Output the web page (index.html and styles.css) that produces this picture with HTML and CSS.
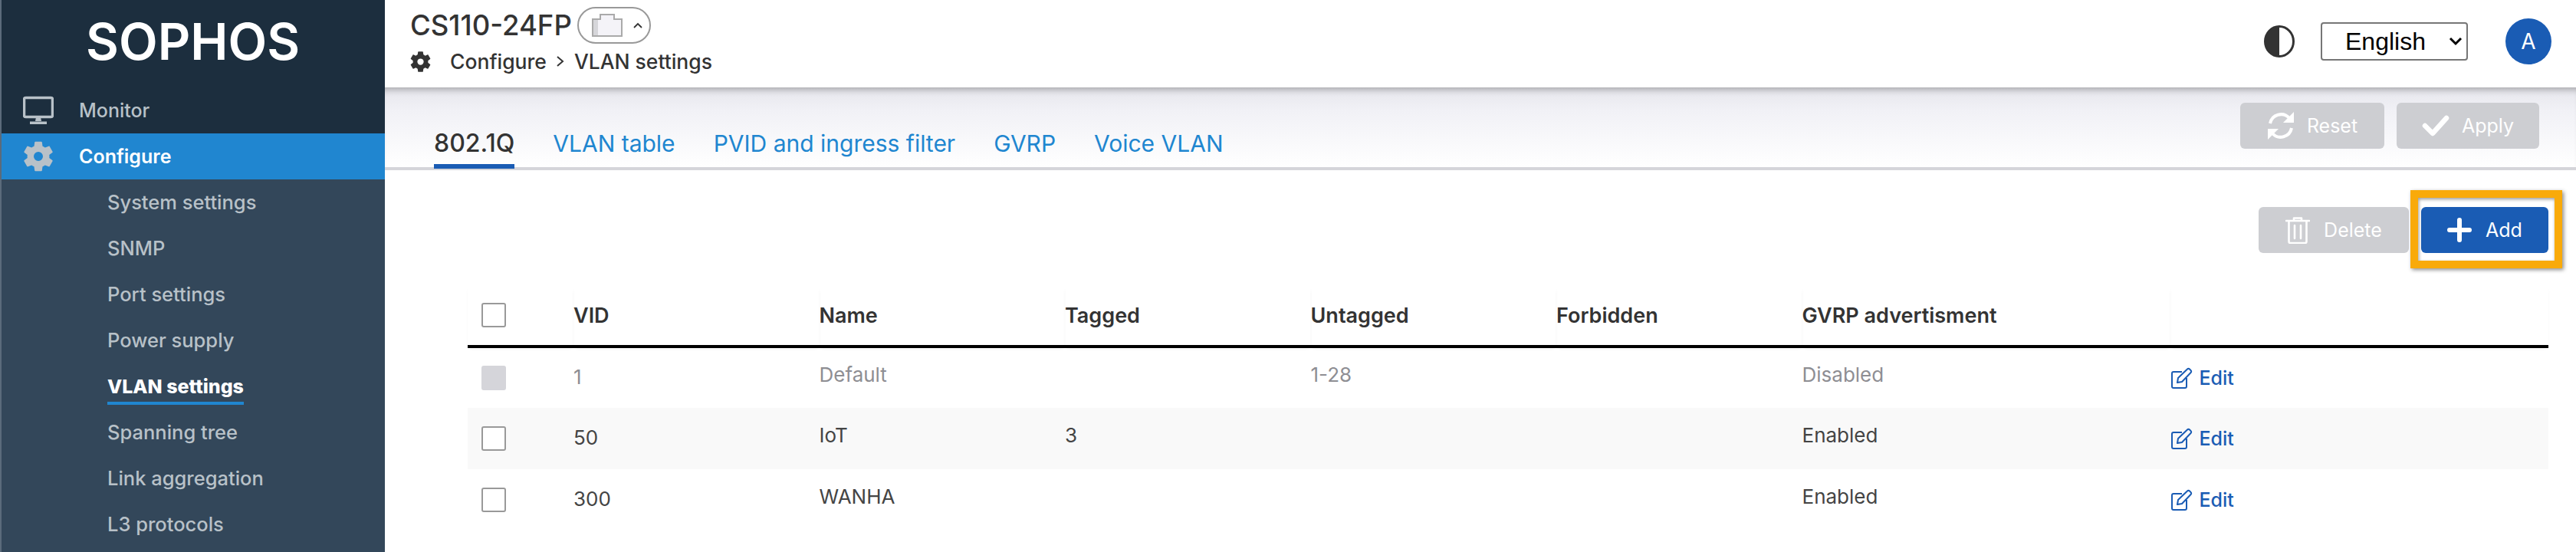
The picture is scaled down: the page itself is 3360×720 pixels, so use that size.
FILE: index.html
```html
<!DOCTYPE html>
<html lang="en">
<head>
    <meta charset="UTF-8">
    <title>VLAN settings</title>
    <link rel="stylesheet" href="styles.css">
</head>
<body>
    <div class="app">
        <aside class="sidebar">
            <div class="logo">SOPHOS</div>
            <a class="nav-item">
                <svg class="nav-icon" viewBox="0 0 40 36"><rect x="1.5" y="1.5" width="37" height="25" rx="2" fill="none" stroke="currentColor" stroke-width="3.5"/><path d="M17 27h6l1 5h-8zM9 32.500h22V36H9z" fill="currentColor"/></svg>
                <span>Monitor</span>
            </a>
            <a class="nav-item active">
                <svg class="nav-icon nav-gear" viewBox="0 0 24 24"><use href="#gear"/></svg>
                <span>Configure</span>
            </a>
            <ul class="subnav">
                <li>System settings</li>
                <li>SNMP</li>
                <li>Port settings</li>
                <li>Power supply</li>
                <li class="current"><span>VLAN settings</span></li>
                <li>Spanning tree</li>
                <li>Link aggregation</li>
                <li>L3 protocols</li>
            </ul>
        </aside>

        <main class="content">
            <header class="topbar">
                <div class="device">
                    <div class="device-title">
                        <h1>CS110-24FP</h1>
                        <div class="device-pill">
                            <svg class="port-icon" viewBox="0 0 40 30"><path d="M1 29V7h10V1h18v6h10v22z" fill="#f4f3f8" stroke="#aaa" stroke-width="2"/><path d="M2 8h6v20H2z" fill="#d6d6da"/></svg>
                            <svg class="pill-chevron" viewBox="0 0 12 8"><path d="M1 7l5-5 5 5" fill="none" stroke="#333" stroke-width="1.800"/></svg>
                        </div>
                    </div>
                    <div class="crumbs">
                        <svg class="crumb-gear" viewBox="0 0 24 24"><use href="#gear"/></svg>
                        <span>Configure</span>
                        <svg class="crumb-sep" viewBox="0 0 12 16"><path d="M2 2l7 6-7 6" fill="none" stroke="#333" stroke-width="2"/></svg>
                        <span>VLAN settings</span>
                    </div>
                </div>
                <div class="top-tools">
                    <svg class="contrast" viewBox="0 0 40 42"><ellipse cx="20" cy="21" rx="18.500" ry="19.500" fill="#fff" stroke="#333" stroke-width="3"/><path d="M20 2a19 19 0 0 0 0 38z" fill="#333"/></svg>
                    <div class="lang">
                        <select class="lang-select"><option>English</option></select>
                        <svg class="lang-chevron" viewBox="0 0 18 12"><path d="M2 2l7 7 7-7" fill="none" stroke="#000" stroke-width="3"/></svg>
                    </div>
                    <div class="avatar">A</div>
                </div>
            </header>

            <div class="tabbar">
                <nav class="tabs">
                    <a class="tab selected">802.1Q</a>
                    <a class="tab">VLAN table</a>
                    <a class="tab">PVID and ingress filter</a>
                    <a class="tab">GVRP</a>
                    <a class="tab">Voice VLAN</a>
                </nav>
                <div class="tab-actions">
                    <button class="btn btn-off btn-reset">
                        <svg class="btn-icon-reset" viewBox="0 0 36 36"><path d="M4 15a14.500 14.500 0 0 1 25-7" fill="none" stroke="currentColor" stroke-width="4"/><path d="M35 0v14H21z" fill="currentColor"/><path d="M32 21a14.500 14.500 0 0 1-25 7" fill="none" stroke="currentColor" stroke-width="4"/><path d="M1 36V22h14z" fill="currentColor"/></svg>
                        Reset
                    </button>
                    <button class="btn btn-off btn-apply">
                        <svg class="btn-icon-check" viewBox="0 0 36 28"><path d="M4 14l10 10L32 4" fill="none" stroke="currentColor" stroke-width="6.500" stroke-linecap="round" stroke-linejoin="round"/></svg>
                        Apply
                    </button>
                </div>
            </div>

            <section class="panel">
                <div class="panel-actions">
                    <button class="btn btn-off btn-delete">
                        <svg class="btn-icon-trash" viewBox="0 0 32 36"><path d="M1 6h30M11 6V2.500h10V6M4.500 6v27a2 2 0 0 0 2 2h19a2 2 0 0 0 2-2V6M12 12v17M20 12v17" fill="none" stroke="currentColor" stroke-width="2.600" stroke-linecap="round" stroke-linejoin="round"/></svg>
                        Delete
                    </button>
                    <button class="btn btn-add">
                        <svg class="btn-icon-plus" viewBox="0 0 32 32"><path d="M16 3v26M3 16h26" fill="none" stroke="currentColor" stroke-width="6" stroke-linecap="round"/></svg>
                        Add
                    </button>
                    <div class="highlight"></div>
                </div>

                <table class="vlan-table">
                    <thead>
                        <tr>
                            <th class="col-check"><span class="check"></span></th>
                            <th class="col-vid">VID</th>
                            <th class="col-name">Name</th>
                            <th class="col-name">Tagged</th>
                            <th class="col-name">Untagged</th>
                            <th class="col-name">Forbidden</th>
                            <th class="col-gvrp">GVRP advertisment</th>
                            <th></th>
                        </tr>
                    </thead>
                    <tbody>
                        <tr class="disabled">
                            <td><span class="check"></span></td>
                            <td class="vid">1</td>
                            <td>Default</td>
                            <td></td>
                            <td>1-28</td>
                            <td></td>
                            <td>Disabled</td>
                            <td class="edit"><a><svg viewBox="0 0 28 28"><use href="#pencil"/></svg>Edit</a></td>
                        </tr>
                        <tr>
                            <td><span class="check"></span></td>
                            <td class="vid">50</td>
                            <td>IoT</td>
                            <td>3</td>
                            <td></td>
                            <td></td>
                            <td>Enabled</td>
                            <td class="edit"><a><svg viewBox="0 0 28 28"><use href="#pencil"/></svg>Edit</a></td>
                        </tr>
                        <tr>
                            <td><span class="check"></span></td>
                            <td class="vid">300</td>
                            <td>WANHA</td>
                            <td></td>
                            <td></td>
                            <td></td>
                            <td>Enabled</td>
                            <td class="edit"><a><svg viewBox="0 0 28 28"><use href="#pencil"/></svg>Edit</a></td>
                        </tr>
                    </tbody>
                </table>
            </section>
        </main>
    </div>

    <!-- shared icons -->
    <svg class="icon-defs" aria-hidden="true">
        <symbol id="gear" viewBox="0 0 24 24">
            <path fill="currentColor" fill-rule="evenodd" d="M19.140 12.940c.04-.3.06-.61.06-.94 0-.32-.02-.64-.07-.94l2.030-1.580c.18-.14.23-.41.12-.61l-1.920-3.320c-.12-.22-.37-.29-.59-.22l-2.390.96c-.5-.38-1.030-.7-1.620-.94l-.36-2.540c-.04-.24-.24-.41-.48-.41h-3.840c-.24 0-.43.17-.47.41l-.36 2.540c-.59.24-1.130.57-1.620.94l-2.390-.96c-.22-.08-.47 0-.59.22L2.740 8.870c-.12.21-.08.47.12.61l2.030 1.580c-.05.3-.09.63-.09.94s.02.64.07.94l-2.030 1.580c-.18.14-.23.41-.12.61l1.920 3.320c.12.22.37.29.59.22l2.390-.96c.5.38 1.030.7 1.620.94l.36 2.540c.05.24.24.41.48.41h3.840c.24 0 .44-.17.47-.41l.36-2.540c.59-.24 1.130-.56 1.620-.94l2.390.96c.22.08.47 0 .59-.22l1.920-3.320c.12-.22.07-.47-.12-.61l-2.010-1.580zM12 15a3 3 0 1 1 0-6 3 3 0 0 1 0 6z"/>
        </symbol>
        <symbol id="pencil" viewBox="0 0 28 28">
            <path d="M14 6H3a2 2 0 0 0-2 2v17a2 2 0 0 0 2 2h15a2 2 0 0 0 2-2V14" fill="none" stroke="currentColor" stroke-width="2"/>
            <path d="M8 20l1-6L21 2.500a2 2 0 0 1 3 0l1.500 1.500a2 2 0 0 1 0 3L14 19z" fill="none" stroke="currentColor" stroke-width="2" stroke-linejoin="round"/>
        </symbol>
    </svg>
</body>
</html>
```

FILE: styles.css
```css
* {
    box-sizing: border-box;
}

html, body {
    margin: 0;
    height: 720px;
    overflow: hidden;
}

body {
    font-family: Inter, "Noto Sans", sans-serif;
    font-size: 25px;
    color: #333;
    background-color: #fff;
}

.app {
    display: flex;
    height: 720px;
}

.icon-defs {
    display: none;
}

/* Sidebar */
.sidebar {
    flex: 0 0 502px;
    background-color: #33475a;
    border-left: 2px solid rgba(255, 255, 255, 0.2);
    overflow: hidden;
}

.logo {
    height: 114px;
    background-color: #1c2e3e;
    padding-left: 110px;
    color: #fff;
    font-size: 66px;
    font-weight: 600;
    line-height: 108px;
}

.nav-item {
    display: flex;
    align-items: center;
    height: 60px;
    padding-left: 28px;
    gap: 33px;
    background-color: #1c2e3e;
    color: #b8c1c8;
    font-weight: 500;
}

.nav-item.active {
    background-color: #2086d0;
    color: #fff;
    font-weight: 600;
}

.nav-icon {
    width: 40px;
    height: 38px;
    color: #b8c1c8;
}

.nav-gear {
    width: 48px;
    height: 48px;
    margin: 0 -4px;
}

.subnav {
    list-style: none;
    margin: 0;
    padding: 0;
}

.subnav li {
    height: 60px;
    padding-left: 138px;
    line-height: 60px;
    color: #b8c1c8;
    font-size: 25.5px;
    font-weight: 500;
}

.subnav .current {
    color: #fff;
    font-size: 25px;
    font-weight: 800;
}

.subnav .current span {
    display: inline-block;
    line-height: 36px;
    height: 42px;
    border-bottom: 4px solid #2086d0;
    vertical-align: top;
    margin-top: 12px;
}

/* Top bar */
.content {
    flex: 1;
    min-width: 0;
}

.topbar {
    display: flex;
    justify-content: space-between;
    height: 114px;
    padding-left: 33px;
    background-color: #fff;
}

.device-title {
    display: flex;
    align-items: center;
    gap: 7px;
    height: 64px;
    padding-top: 2px;
}

.device-title h1 {
    margin: 0;
    font-size: 36.500px;
    font-weight: 500;
}

.device-pill {
    display: flex;
    align-items: center;
    gap: 14px;
    width: 96px;
    height: 48px;
    padding-left: 17px;
    border: 2px solid #999;
    border-radius: 24px;
}

.port-icon {
    width: 40px;
    height: 30px;
}

.pill-chevron {
    width: 12px;
    height: 8px;
}

.crumbs {
    display: flex;
    align-items: center;
    height: 32px;
    font-size: 26.5px;
    font-weight: 500;
}

.crumb-gear {
    width: 33px;
    height: 33px;
    margin: 0 22px 0 -3px;
}

.crumb-sep {
    width: 12px;
    height: 16px;
    margin: 0 12px;
}

.top-tools {
    display: flex;
    align-items: center;
    height: 108px;
    padding-right: 32px;
}

.contrast {
    width: 40px;
    height: 42px;
    margin-right: 34px;
}

.lang {
    position: relative;
    margin-right: 49px;
}

.lang-select {
    display: block;
    appearance: none;
    width: 192px;
    height: 50px;
    padding-left: 30px;
    border: 2px solid #767676;
    border-radius: 4px;
    background-color: #fff;
    color: #000;
    font-family: "Liberation Sans", Arial, sans-serif;
    font-size: 32px;
}

.lang-chevron {
    position: absolute;
    right: 7px;
    top: 19px;
    width: 18px;
    height: 12px;
}

.avatar {
    width: 60px;
    height: 60px;
    border-radius: 50%;
    background-color: #1a5cb4;
    color: #fff;
    font-size: 28px;
    line-height: 60px;
    text-align: center;
}

/* Tabs */
.tabbar {
    display: flex;
    justify-content: space-between;
    height: 108px;
    padding: 0 48px 0 64px;
    border-bottom: 4px solid #d5d5da;
    background: linear-gradient(#e6e6ec 0, #f1f1f6 30px, #fff 100%);
    box-shadow: inset 0 9px 8px -6px rgba(0, 0, 0, 0.28);
}

.tabs {
    display: flex;
    align-items: flex-end;
    gap: 50px;
}

.tab {
    height: 46px;
    color: #2086d0;
    font-size: 30px;
    line-height: 30px;
}

.tab.selected {
    height: 48px;
    margin-bottom: -2px;
    color: #333;
    font-size: 32px;
    font-weight: 500;
    border-bottom: 6px solid #1a5cb4;
}

.tab-actions {
    display: flex;
    gap: 16px;
    padding-top: 20px;
}

.btn {
    display: flex;
    align-items: center;
    justify-content: center;
    height: 60px;
    border: none;
    border-radius: 6px;
    color: #fff;
    font-family: inherit;
    font-size: 25px;
}

.btn-off {
    background-color: #cdced2;
}

.btn-reset {
    width: 188px;
    gap: 16px;
}

.btn-apply {
    width: 186px;
    gap: 16px;
}

.btn-icon-reset {
    width: 36px;
    height: 36px;
}

.btn-icon-check {
    width: 36px;
    height: 28px;
}

/* Table panel */
.panel {
    padding: 48px 36px 0 108px;
}

.panel-actions {
    position: relative;
    display: flex;
    justify-content: flex-end;
    gap: 16px;
    height: 60px;
    margin-bottom: 42px;
}

.btn-delete {
    width: 196px;
    gap: 18px;
}

.btn-add {
    width: 166px;
    gap: 18px;
    background-color: #1a5cb4;
}

.btn-icon-trash {
    width: 32px;
    height: 36px;
}

.btn-icon-plus {
    width: 32px;
    height: 32px;
}

.highlight {
    position: absolute;
    right: -18px;
    top: -22px;
    width: 198px;
    height: 102px;
    border: 10px solid #f9aa0a;
    box-shadow: 2px 2px 5px rgba(0, 0, 0, 0.45), inset 1px 2px 4px rgba(0, 0, 0, 0.4);
}

.vlan-table {
    width: 2714px;
    border-collapse: collapse;
    table-layout: fixed;
}

.vlan-table th {
    height: 80px;
    padding: 0;
    font-size: 27px;
    font-weight: 600;
    text-align: left;
    border-bottom: 4px solid #000;
    box-shadow: 0 4px 4px -2px rgba(0, 0, 0, 0.1);
}

.col-check {
    width: 138px;
}

.col-vid,
.col-name {
    width: 320.500px;
}

.col-gvrp {
    width: 480px;
}

.vlan-table td {
    height: 80px;
    padding: 0 0 10px;
    color: #444;
    font-size: 26px;
    font-weight: 400;
}

.vlan-table td.vid {
    padding-bottom: 3px;
}

.vlan-table td.edit,
.vlan-table td:first-child {
    padding-bottom: 0;
}

.vlan-table tbody tr:nth-child(even) {
    background-color: #f9f9f9;
}

.vlan-table .disabled td {
    color: #8e8e93;
}

.check {
    display: block;
    width: 32px;
    height: 32px;
    margin-left: 18px;
    border: 2px solid #999;
    border-radius: 3px;
    background-color: #fff;
}

.disabled .check {
    border-color: #d5d5da;
    background-color: #d5d5da;
}

.vlan-table td.edit a {
    display: flex;
    align-items: center;
    gap: 8px;
    color: #1a5cb4;
    font-size: 25px;
    font-weight: 500;
}

.edit svg {
    width: 30px;
    height: 28px;
}
```
